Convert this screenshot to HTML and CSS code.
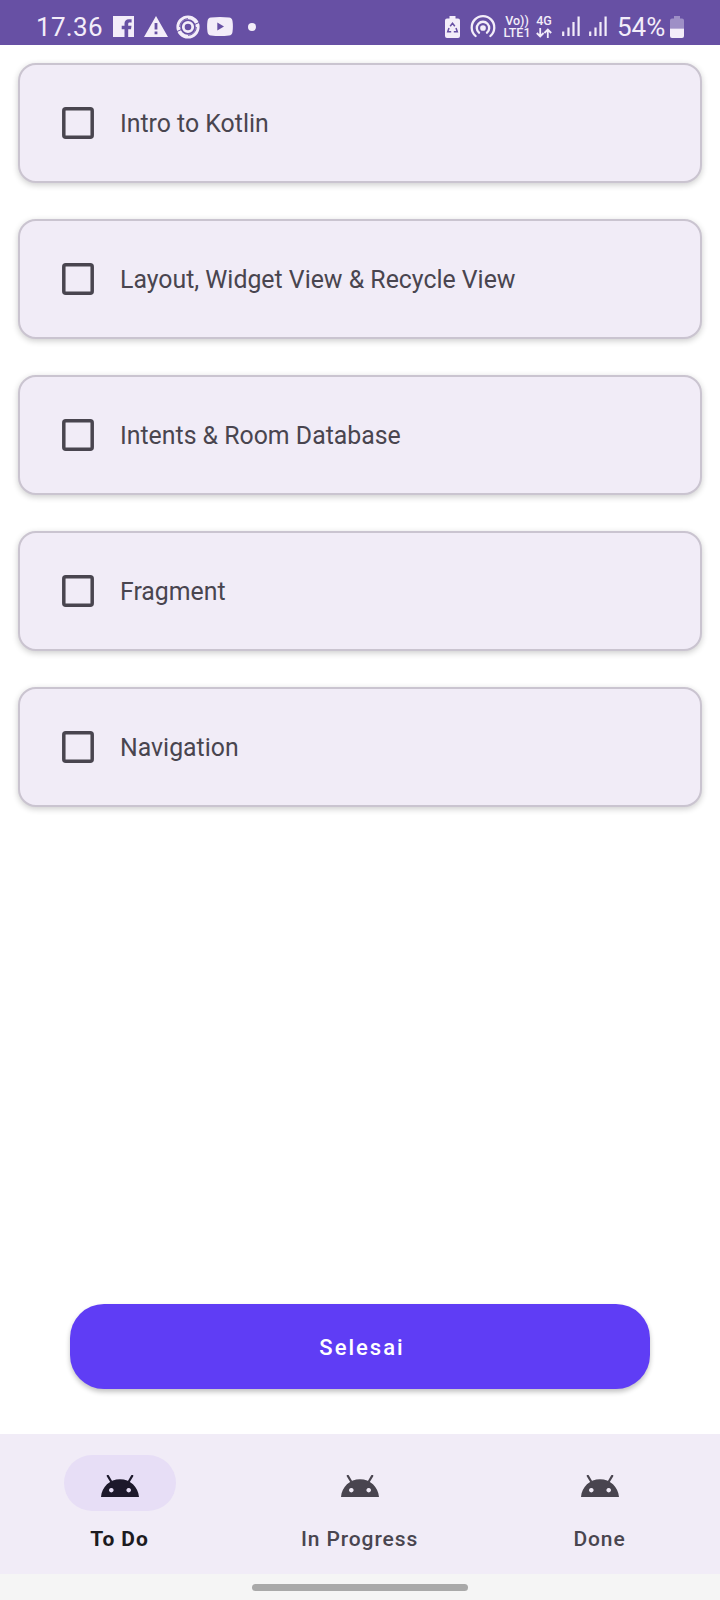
FILE: index.html
```html
<!DOCTYPE html>
<html lang="id">
<head>
<meta charset="utf-8">
<title>To Do</title>
<link rel="stylesheet" href="styles.css">
</head>
<body>
<svg class="sprite" aria-hidden="true">
  <symbol id="android" viewBox="0 0 38 22">
    <path d="M6.800 .9L10.600 7.200M31.200 .9L27.400 7.200" fill="none" stroke="currentColor" stroke-width="2.200" stroke-linecap="round"/>
    <path fill="currentColor" fill-rule="evenodd" d="M0 22C.8 12 8.800 4.300 19 4.300S37.200 12 38 22ZM10.300 12.900a2.300 2.300 0 1 0 .01 0ZM27.700 12.900a2.300 2.300 0 1 0 .01 0Z"/>
  </symbol>
  <symbol id="signal" viewBox="0 0 18 21">
    <path d="M1.200 15.500V20M6.500 11.500V20M11.500 6V20M16.600 .5V20" fill="none" stroke="currentColor" stroke-width="2.200"/>
  </symbol>
  <symbol id="unchecked" viewBox="0 0 32 32">
    <rect x="1.800" y="1.800" width="28.400" height="28.400" rx="2" fill="none" stroke="currentColor" stroke-width="3.500"/>
  </symbol>
</svg>
<header class="status">
  <span class="clock">17.36</span>
  <svg class="i-fb" viewBox="0 0 21 21"><path fill="currentColor" fill-rule="evenodd" d="M0 0H21V21H15.200V13.200H18L18.500 9.800H15.200V8C15.200 6.800 15.800 6.400 17 6.400H18.600V3.300H16C13 3.300 11.500 5 11.500 7.500V9.800H8.700V13.200H11.500V21H0Z"/></svg>
  <svg class="i-warn" viewBox="0 0 24 21"><path fill="currentColor" fill-rule="evenodd" d="M12 0L24 21H0ZM10.600 7V13.500H13.400V7ZM10.600 15.500V18.200H13.400V15.500Z"/></svg>
  <svg class="i-ring" viewBox="0 0 24 24"><g fill="none" stroke="currentColor"><circle cx="12" cy="12" r="4.700" stroke-width="2.800"/><circle cx="12" cy="12" r="9.700" stroke-width="3.800"/></g><path d="M3.700 12A8.300 8.300 0 0 1 12 3.700M20.300 12A8.300 8.300 0 0 1 12 20.300M1 16.500L5.500 14.500M23 7.500L18.500 9.500" fill="none" stroke="#6750a4" stroke-width="1"/></svg>
  <svg class="i-yt" viewBox="0 0 26 19"><path fill="currentColor" fill-rule="evenodd" d="M4 .5Q13-.5 22 .5Q25 .8 25.500 4Q26.300 9.500 25.500 15Q25 18.200 22 18.500Q13 19.500 4 18.500Q1 18.200 .5 15Q-.3 9.500 .5 4Q1 .8 4 .5ZM10.300 5.500V13.500L17 9.500Z"/></svg>
  <span class="dot"></span>
  <span class="spacer"></span>
  <svg class="i-saver" viewBox="0 0 15 22"><path fill="currentColor" d="M4.500 0H10.500V2.500H13Q15 2.500 15 4.500V20Q15 22 13 22H2Q0 22 0 20V4.500Q0 2.500 2 2.500H4.500Z"/><path d="M5.200 10.200L7.500 7.200L9.800 10.200M11 12L12.300 15.800H8.800M6.200 15.800H2.700L4 12" fill="none" stroke="#6750a4" stroke-width="1.500"/></svg>
  <svg class="i-spot" viewBox="0 0 26 23"><g fill="none" stroke="currentColor" stroke-width="2.300" stroke-linecap="round"><circle cx="13" cy="13" r="1.700" fill="currentColor"/><path d="M9 17.700A6.200 6.200 0 1 1 17 17.700M5.600 21A11.300 11.300 0 1 1 20.400 21"/></g></svg>
  <span class="net volte"><span>Vo))</span><span>LTE1</span></span>
  <span class="net lte"><span>4G</span><svg viewBox="0 0 16 10"><path d="M4.200 0V8.500M.8 5L4.200 8.500L7.600 5M11.800 10V1.500M8.400 5L11.800 1.500L15.200 5" fill="none" stroke="currentColor" stroke-width="1.800"/></svg></span>
  <svg class="i-sig"><use href="#signal"/></svg>
  <svg class="i-sig"><use href="#signal"/></svg>
  <span class="percent">54%</span>
  <svg class="i-batt" viewBox="0 0 14 22"><path opacity=".4" fill="currentColor" d="M4 0H10V2.500H12Q14 2.500 14 4.500V12.500H0V4.500Q0 2.500 2 2.500H4Z"/><path fill="currentColor" d="M0 12.500H14V20Q14 22 12 22H2Q0 22 0 20Z"/></svg>
</header>
<main class="content">
  <ul class="tasks">
    <li class="card"><svg class="box"><use href="#unchecked"/></svg><span class="name">Intro to Kotlin</span></li>
    <li class="card"><svg class="box"><use href="#unchecked"/></svg><span class="name">Layout, Widget View &amp; Recycle View</span></li>
    <li class="card"><svg class="box"><use href="#unchecked"/></svg><span class="name">Intents &amp; Room Database</span></li>
    <li class="card"><svg class="box"><use href="#unchecked"/></svg><span class="name">Fragment</span></li>
    <li class="card"><svg class="box"><use href="#unchecked"/></svg><span class="name">Navigation</span></li>
  </ul>
  <button class="finish">Selesai</button>
</main>
<nav class="tabs">
  <a class="tab active"><span class="pill"><svg><use href="#android"/></svg></span><span class="label">To Do</span></a>
  <a class="tab"><span class="pill"><svg><use href="#android"/></svg></span><span class="label">In Progress</span></a>
  <a class="tab"><span class="pill"><svg><use href="#android"/></svg></span><span class="label">Done</span></a>
</nav>
<footer class="gesture"><span class="handle"></span></footer>
</body>
</html>
```

FILE: styles.css
```css
* { box-sizing: border-box; }
body {
  margin: 0;
  width: 720px;
  height: 1600px;
  display: flex;
  flex-direction: column;
  background: #fff;
  font-family: Roboto, sans-serif;
  color: #49454f;
}
svg { display: block; flex: none; }
.sprite { display: none; }

.status {
  height: 45px;
  flex: none;
  display: flex;
  align-items: center;
  padding: 8px 36px 0;
  background: #6750a4;
  color: #f3edf9;
}
.clock { width: 77px; font-size: 26px; letter-spacing: 0.3px; line-height: 36px; }
.i-fb { width: 21px; height: 21px; }
.i-warn { width: 24px; height: 21px; margin-left: 10px; }
.i-ring { width: 24px; height: 24px; margin-left: 8px; }
.i-yt { width: 26px; height: 19px; margin-left: 7px; }
.dot { width: 8px; height: 8px; margin-left: 15px; border-radius: 50%; background: currentColor; }
.spacer { flex: 1; }
.i-saver { width: 15px; height: 22px; }
.i-spot { width: 26px; height: 23px; margin-left: 10px; }
.net { display: flex; flex-direction: column; font-weight: 500; font-size: 12.500px; line-height: 12px; white-space: nowrap; }
.volte { width: 26px; margin-left: 8px; align-items: center; }
.lte { width: 16px; margin-left: 6px; align-items: center; }
.lte svg { width: 16px; height: 10px; margin-top: 1px; }
.i-sig { width: 18px; height: 21px; margin-left: 9.500px; }
.percent { width: 52px; margin-left: 11px; font-size: 26px; line-height: 36px; text-indent: -1px; }
.i-batt { width: 14px; height: 22px; }

.content {
  flex: 1;
  display: flex;
  flex-direction: column;
  justify-content: space-between;
  padding: 18px 18px 45px;
}
.tasks { margin: 0; padding: 0; list-style: none; display: grid; gap: 36px; }
.card {
  height: 120px;
  display: flex;
  align-items: center;
  padding-left: 42px;
  border: 2px solid #cac4d0;
  border-radius: 18px;
  background: #f1ecf7;
  box-shadow: 0 2px 6px rgba(0, 0, 0, 0.2);
}
.box { width: 32px; height: 32px; }
.name { margin-left: 26px; padding-top: 2px; font-size: 24.850px; line-height: 30px; }
.finish {
  height: 85px;
  margin: 0 52px;
  padding: 2px 0 0 4px;
  border: 0;
  border-radius: 34px;
  background: #5f3df5;
  box-shadow: 0 3px 5px rgba(0, 0, 0, 0.24);
  color: #fff;
  font: 500 22px Roboto, sans-serif;
  letter-spacing: 2px;
}

.tabs { height: 140px; flex: none; display: grid; grid-template-columns: repeat(3, 240px); background: #f1ecf7; }
.tab { display: flex; flex-direction: column; align-items: center; padding-top: 21px; }
.pill { width: 112px; height: 56px; border-radius: 28px; padding: 20px 37px 0; }
.pill svg { width: 38px; height: 22px; }
.label { margin: 15px 1px 0 0; font-size: 21px; line-height: 26px; font-weight: 500; letter-spacing: 0.900px; }
.active { color: #1c1b1f; }
.active .pill { background: #e7def6; color: #1d192b; }
.active .label { font-weight: 700; }
.gesture { height: 26px; flex: none; display: flex; justify-content: center; padding-top: 10px; background: #f5f5f5; }
.handle { width: 216px; height: 7px; border-radius: 4px; background: #a9a9a9; }
```
